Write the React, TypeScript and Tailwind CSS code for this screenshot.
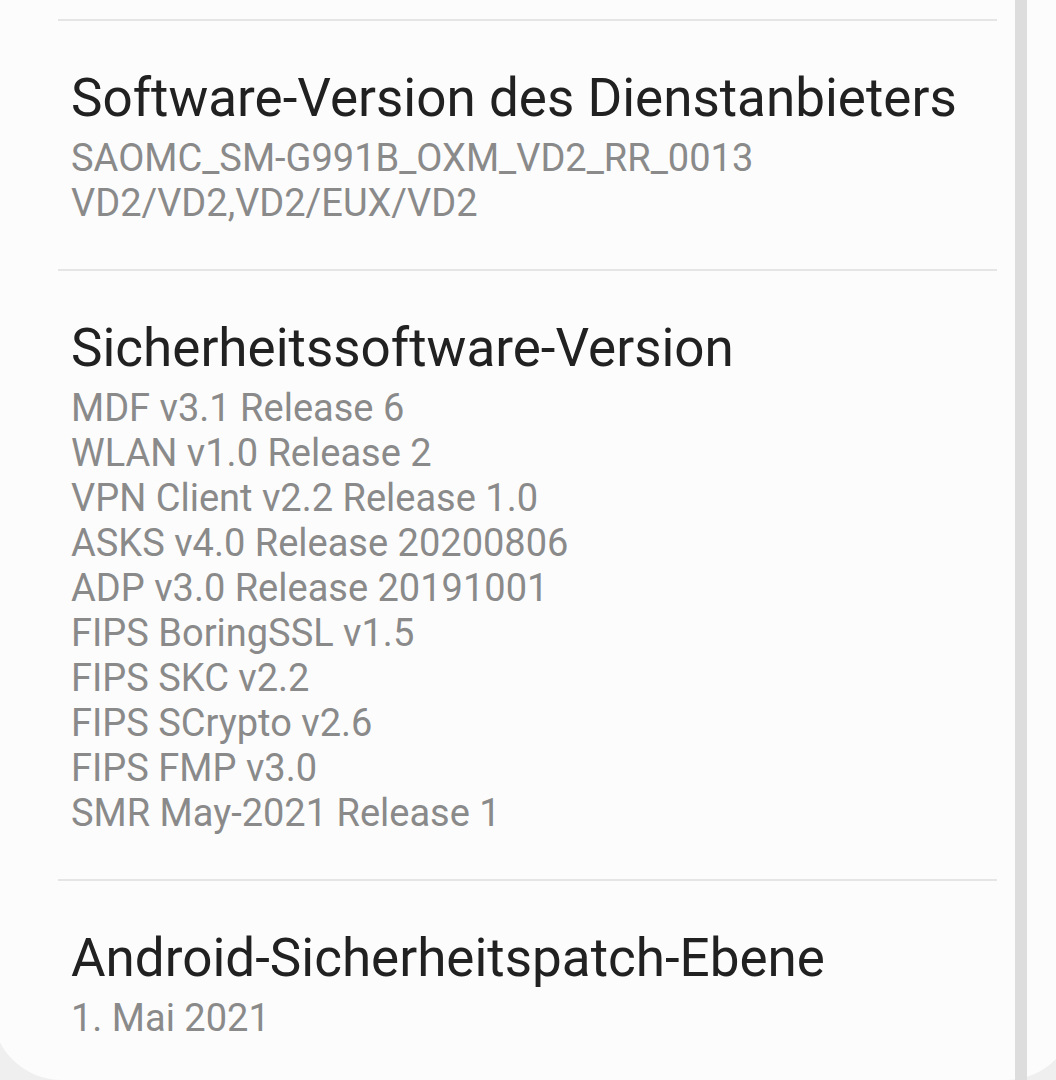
const sections = [
  {
    title: "Software-Version des Dienstanbieters",
    lines: ["SAOMC_SM-G991B_OXM_VD2_RR_0013", "VD2/VD2,VD2/EUX/VD2"],
  },
  {
    title: "Sicherheitssoftware-Version",
    lines: [
      "MDF v3.1 Release 6",
      "WLAN v1.0 Release 2",
      "VPN Client v2.2 Release 1.0",
      "ASKS v4.0 Release 20200806",
      "ADP v3.0 Release 20191001",
      "FIPS BoringSSL v1.5",
      "FIPS SKC v2.2",
      "FIPS SCrypto v2.6",
      "FIPS FMP v3.0",
      "SMR May-2021 Release 1",
    ],
  },
  {
    title: "Android-Sicherheitspatch-Ebene",
    lines: ["1. Mai 2021"],
  },
];

export default function App() {
  return (
    <div
      className="relative h-[1080px] w-[1056px] overflow-hidden bg-[#efefef]"
      style={{ fontFamily: "Roboto, 'Noto Sans', sans-serif" }}
    >
      <div className="-ml-[8px] h-[1080px] w-[1084px] rounded-b-[70px] bg-[#fcfcfc] pt-[19px]">
        {sections.map((s, i) => (
          <div key={i}>
            <div className="ml-[66px] h-[2px] w-[939px] bg-[#e5e5e5]" />
            <div className="pb-[43px] pl-[79px] pt-[47px]">
              <div className="text-[53px] leading-[60px] text-[#212121]">{s.title}</div>
              <div className="mt-[8px] text-[38px] leading-[45px] text-[#8a8a8a]">
                {s.lines.map((l) => (
                  <div key={l}>{l}</div>
                ))}
              </div>
            </div>
          </div>
        ))}
      </div>
      {/* scrollbar */}
      <div className="absolute right-[29px] top-0 h-full w-[12px] bg-[#dddddd]" />
    </div>
  );
}
